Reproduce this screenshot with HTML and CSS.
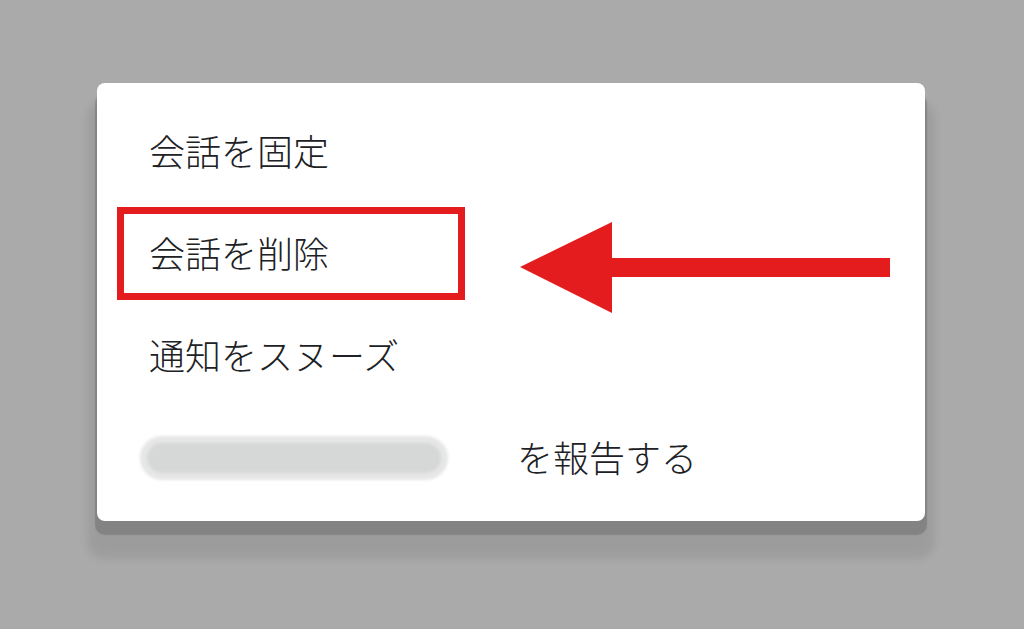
FILE: index.html
```html
<!DOCTYPE html>
<html lang="ja">
<head>
<meta charset="utf-8">
<link rel="stylesheet" href="styles.css">
</head>
<body>
<div class="menu">
  <div class="item">会話を固定</div>
  <div class="item">会話を削除</div>
  <div class="item">通知をスヌーズ</div>
  <div class="item report"><span class="redacted"></span><span class="report-text">を報告する</span></div>
  <div class="highlight"></div>
  <svg class="arrow" width="380" height="100" viewBox="0 0 380 100">
    <polygon points="0,45 92,0 92,36 370,36 370,55 92,55 92,91" fill="#e41c1d"/>
  </svg>
</div>
</body>
</html>
```
FILE: styles.css
```css
html, body {
  margin: 0;
  padding: 0;
}
body {
  background: #aaaaaa;
  width: 1024px;
  height: 629px;
  overflow: hidden;
  padding: 83px 0 0 97px;
  box-sizing: border-box;
  font-family: "Noto Sans CJK JP", "Noto Sans", sans-serif;
}
.menu {
  position: relative;
  width: 828px;
  height: 438px;
  box-sizing: border-box;
  background: #ffffff;
  border-radius: 8px;
  padding: 16px 0 14px 0;
  box-shadow: 0 12px 1px 2px rgba(0, 0, 0, 0.16), 0 28px 8px 10px rgba(0, 0, 0, 0.08);
}
.item {
  height: 102px;
  display: flex;
  align-items: center;
  padding-left: 52px;
  font-size: 36px;
  font-weight: 300;
  line-height: 1;
  color: #202124;
}
.report {
  padding-left: 50px;
}
.redacted {
  display: block;
  width: 294px;
  height: 30px;
  margin-top: 4px;
  border-radius: 15px;
  background: #d6d8d7;
  box-shadow: 0 0 0 7px #e6e6e6;
  filter: blur(1.5px);
}
.report-text {
  margin-left: 76px;
}
.highlight {
  position: absolute;
  left: 20px;
  top: 124px;
  width: 348px;
  height: 93px;
  box-sizing: border-box;
  border: 7px solid #e41c1d;
}
.arrow {
  position: absolute;
  left: 423px;
  top: 139px;
}
```
